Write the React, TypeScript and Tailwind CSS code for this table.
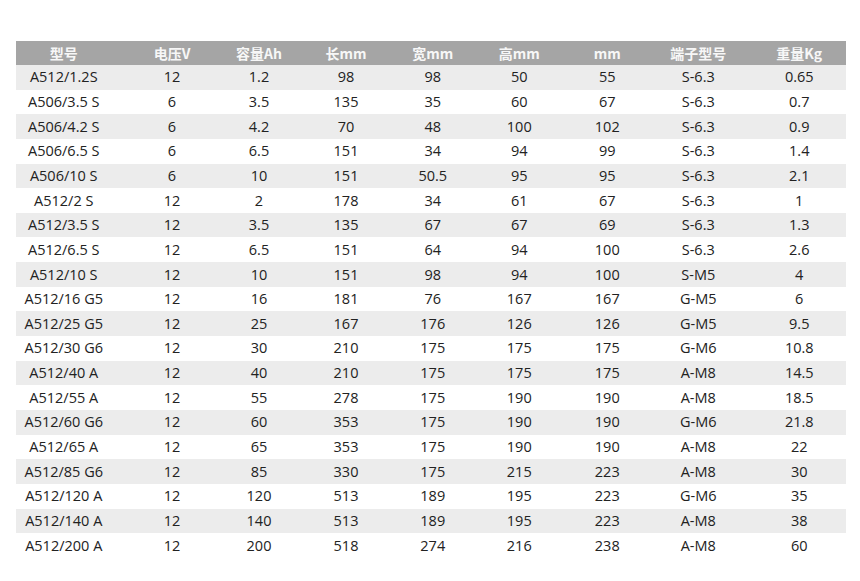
const headers = ["型号", "电压V", "容量Ah", "长mm", "宽mm", "高mm", "mm", "端子型号", "重量Kg"];

const rows: string[][] = [
  ["A512/1.2S", "12", "1.2", "98", "98", "50", "55", "S-6.3", "0.65"],
  ["A506/3.5 S", "6", "3.5", "135", "35", "60", "67", "S-6.3", "0.7"],
  ["A506/4.2 S", "6", "4.2", "70", "48", "100", "102", "S-6.3", "0.9"],
  ["A506/6.5 S", "6", "6.5", "151", "34", "94", "99", "S-6.3", "1.4"],
  ["A506/10 S", "6", "10", "151", "50.5", "95", "95", "S-6.3", "2.1"],
  ["A512/2 S", "12", "2", "178", "34", "61", "67", "S-6.3", "1"],
  ["A512/3.5 S", "12", "3.5", "135", "67", "67", "69", "S-6.3", "1.3"],
  ["A512/6.5 S", "12", "6.5", "151", "64", "94", "100", "S-6.3", "2.6"],
  ["A512/10 S", "12", "10", "151", "98", "94", "100", "S-M5", "4"],
  ["A512/16 G5", "12", "16", "181", "76", "167", "167", "G-M5", "6"],
  ["A512/25 G5", "12", "25", "167", "176", "126", "126", "G-M5", "9.5"],
  ["A512/30 G6", "12", "30", "210", "175", "175", "175", "G-M6", "10.8"],
  ["A512/40 A", "12", "40", "210", "175", "175", "175", "A-M8", "14.5"],
  ["A512/55 A", "12", "55", "278", "175", "190", "190", "A-M8", "18.5"],
  ["A512/60 G6", "12", "60", "353", "175", "190", "190", "G-M6", "21.8"],
  ["A512/65 A", "12", "65", "353", "175", "190", "190", "A-M8", "22"],
  ["A512/85 G6", "12", "85", "330", "175", "215", "223", "A-M8", "30"],
  ["A512/120 A", "12", "120", "513", "189", "195", "223", "G-M6", "35"],
  ["A512/140 A", "12", "140", "513", "189", "195", "223", "A-M8", "38"],
  ["A512/200 A", "12", "200", "518", "274", "216", "238", "A-M8", "60"],
];

// per-column nudge so text sits where the original image has it
const nudge = ["pr-[6px]", "pl-[11px]", "", "", "", "", "", "pr-[4px]", "pl-[4px]"];

const cols = "grid grid-cols-[101.5px_98px_87px_87px_86.5px_86.5px_89.5px_96.5px_97.5px]";

export default function App() {
  return (
    <div className="w-[860px] h-[581px] bg-white pt-[41px] pl-[16px]">
      <div className="w-[830px] font-['Open_Sans','Noto_Sans_CJK_SC',sans-serif]">
        <div className={`${cols} h-[24px] bg-[#a5a5a5]`}>
          {headers.map((h, i) => (
            <div
              key={h}
              className={`flex items-center justify-center text-[14px] font-bold text-[#f7f7f7] font-['Noto_Sans_CJK_SC',sans-serif] ${nudge[i]}`}
            >
              {h}
            </div>
          ))}
        </div>
        {rows.map((r, ri) => (
          <div
            key={r[0]}
            className={`${cols} h-[24.65px] ${ri % 2 === 0 ? "bg-[#ececec]" : "bg-white"}`}
          >
            {r.map((c, ci) => (
              <div
                key={ci}
                className={`flex items-center justify-center text-[14.5px] text-[#222] whitespace-pre ${nudge[ci]}`}
              >
                {c}
              </div>
            ))}
          </div>
        ))}
      </div>
    </div>
  );
}
